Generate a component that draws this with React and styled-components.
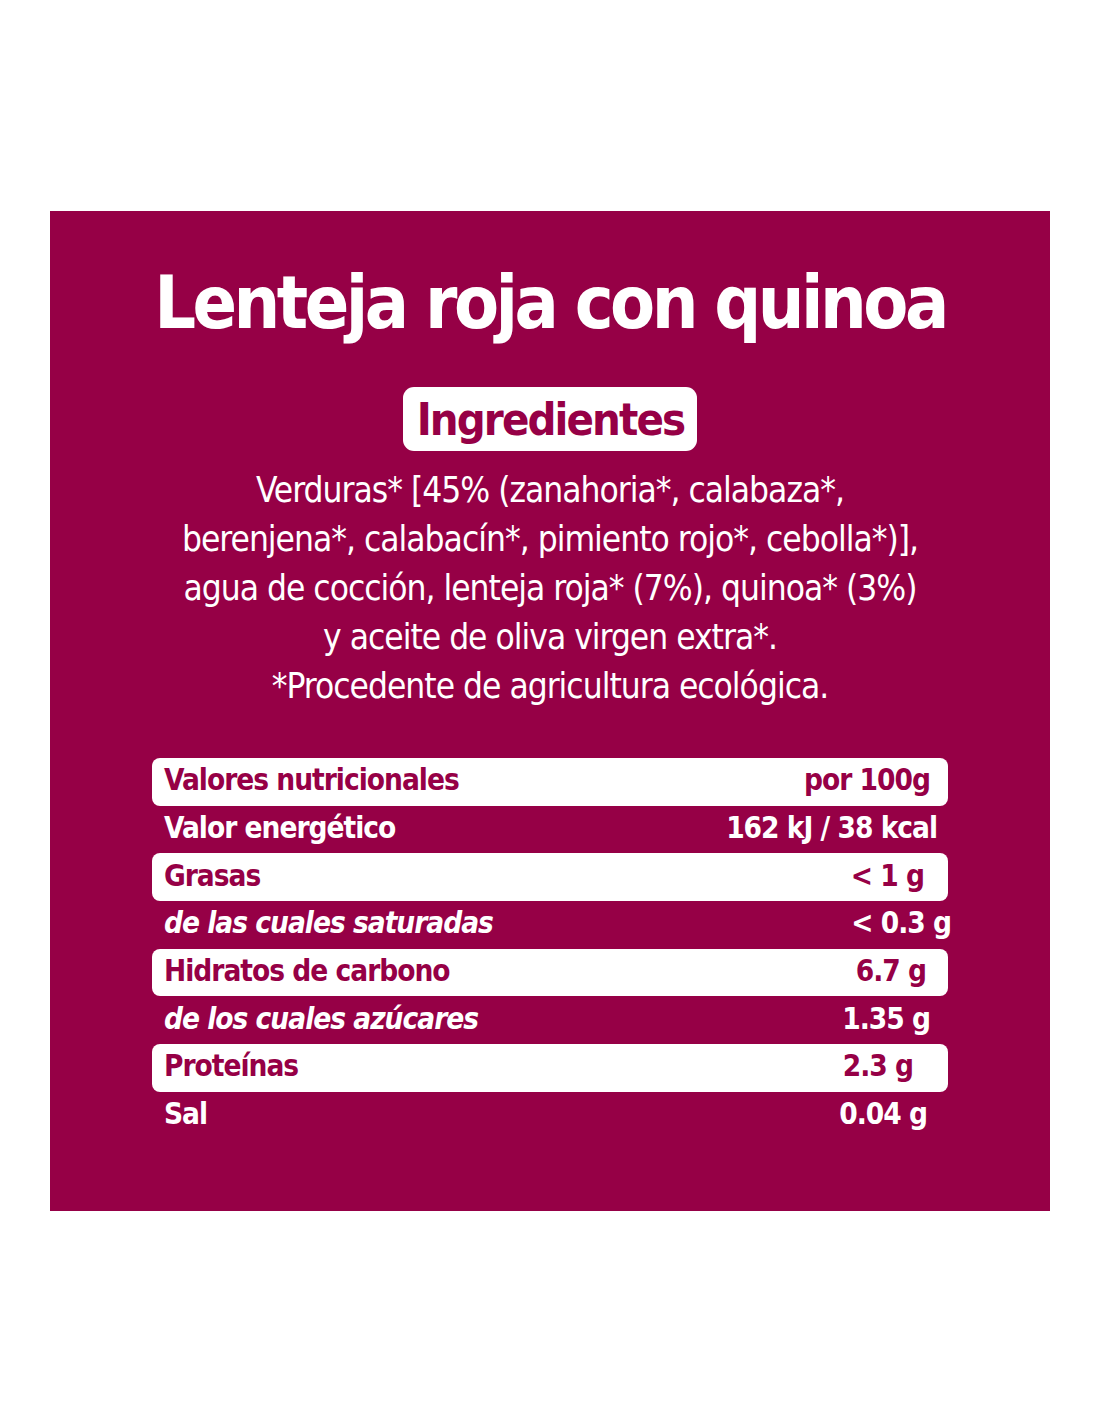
import React from 'react';
import styled, { createGlobalStyle } from 'styled-components';

const GlobalStyle = createGlobalStyle`
  html, body {
    margin: 0;
    padding: 0;
    background: #ffffff;
  }
`;

const Page = styled.div`
  padding: 211px 50px 211px;
`;

const Panel = styled.section`
  height: 1000px;
  background: #960046;
  color: #ffffff;
  display: flex;
  flex-direction: column;
  align-items: center;
  font-family: 'DejaVu Sans Condensed', 'DejaVu Sans', sans-serif;
  font-stretch: condensed;
`;

const Title = styled.h1`
  margin: 47px 0 0;
  font-size: 73px;
  line-height: 90px;
  font-weight: 700;
  letter-spacing: -3.5px;
`;

const Badge = styled.h2`
  margin: 39px 0 0;
  padding: 0 13px 0 14px;
  height: 64px;
  display: flex;
  align-items: center;
  background: #ffffff;
  color: #960046;
  border-radius: 11px;
  font-size: 45px;
  font-weight: 700;
  letter-spacing: -1.9px;
`;

const Ingredients = styled.p`
  margin: 15px 0 0;
  text-align: center;
  font-size: 35px;
  line-height: 49px;
  font-weight: 400;
  letter-spacing: -1px;
`;

const Table = styled.div`
  margin-top: 47px;
  width: 796px;
  display: flex;
  flex-direction: column;
`;

const Row = styled.div`
  height: 47.7px;
  display: flex;
  align-items: center;
  justify-content: space-between;
  box-sizing: border-box;
  padding: 0 0 3px 12px;
  border-radius: 8px;
  background: ${p => (p.$filled ? '#ffffff' : 'transparent')};
  color: ${p => (p.$filled ? '#960046' : '#ffffff')};
  font-size: 29.5px;
  font-weight: 700;
  letter-spacing: -1px;
  font-style: ${p => (p.$sub ? 'italic' : 'normal')};
`;

const Value = styled.span`
  font-style: normal;
  white-space: nowrap;
  margin-right: ${p => p.$inset}px;
`;

const rows = [
  { label: 'Valores nutricionales', value: 'por 100g', filled: true, inset: 18 },
  { label: 'Valor energético', value: '162 kJ / 38 kcal', inset: 11 },
  { label: 'Grasas', value: '< 1 g', filled: true, inset: 24 },
  { label: 'de las cuales saturadas', value: '< 0.3 g', sub: true, inset: -3 },
  { label: 'Hidratos de carbono', value: '6.7 g', filled: true, inset: 22 },
  { label: 'de los cuales azúcares', value: '1.35 g', sub: true, inset: 18 },
  { label: 'Proteínas', value: '2.3 g', filled: true, inset: 35 },
  { label: 'Sal', value: '0.04 g', inset: 21 },
];

export default function App() {
  return (
    <Page>
      <GlobalStyle />
      <Panel>
        <Title>Lenteja roja con quinoa</Title>
        <Badge>Ingredientes</Badge>
        <Ingredients>
          Verduras* [45% (zanahoria*, calabaza*,
          <br />
          berenjena*, calabacín*, pimiento rojo*, cebolla*)],
          <br />
          agua de cocción, lenteja roja* (7%), quinoa* (3%)
          <br />
          y aceite de oliva virgen extra*.
          <br />
          *Procedente de agricultura ecológica.
        </Ingredients>
        <Table>
          {rows.map(r => (
            <Row key={r.label} $filled={r.filled} $sub={r.sub}>
              <span>{r.label}</span>
              <Value $inset={r.inset}>{r.value}</Value>
            </Row>
          ))}
        </Table>
      </Panel>
    </Page>
  );
}
